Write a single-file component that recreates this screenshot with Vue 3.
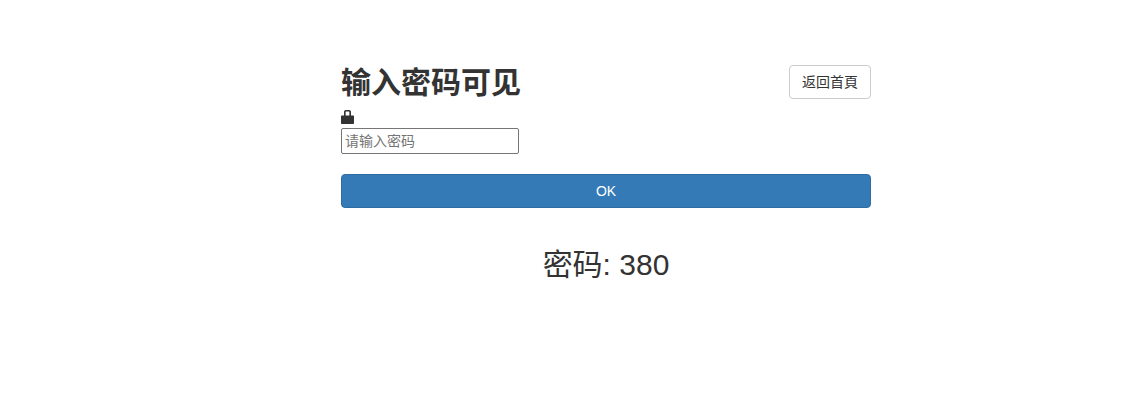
<template>
  <div class="page">
    <div class="panel">
      <div class="head">
        <h1 class="title">输入密码可见</h1>
        <a class="back">返回首頁</a>
      </div>
      <form class="form" @submit.prevent>
        <svg class="lock" width="13" height="14" viewBox="0 0 13 14" xmlns="http://www.w3.org/2000/svg">
          <path fill="#333" fill-rule="evenodd" d="M3 5.500V2C3 .8 3.800 0 5 0h3c1.200 0 2 .8 2 2v3.500h2.200c.5 0 .8.300.8.800v6.900c0 .5-.3.800-.8.800H.8c-.5 0-.8-.3-.8-.8V6.300c0-.5.3-.8.800-.8H3zm1.600 0h3.800V2.200c0-.4-.2-.6-.6-.6H5.200c-.4 0-.6.200-.6.600v3.300z"/>
        </svg>
        <input class="pwd" type="password" placeholder="请输入密码" />
        <button class="ok" type="submit">OK</button>
      </form>
      <p class="answer">密码: 380</p>
    </div>
  </div>
</template>

<script setup>
</script>

<style>
html, body {
  margin: 0;
  background: #fff;
}
</style>

<style scoped>
.page {
  width: 1132px;
  height: 408px;
  padding-top: 65px;
  box-sizing: border-box;
  font-family: "Liberation Sans", "Noto Sans CJK SC", sans-serif;
  color: #333;
}

.panel {
  width: 530px;
  margin-left: 341px;
}

.head {
  display: flex;
  justify-content: space-between;
  align-items: center;
  height: 34px;
}

.title {
  margin: 2px 0 0;
  font-size: 30px;
  line-height: 34px;
  font-weight: 700;
}

.back {
  box-sizing: border-box;
  height: 34px;
  padding: 6px 12px;
  font-size: 14px;
  line-height: 20px;
  border: 1px solid #ccc;
  border-radius: 4px;
}

.form {
  display: flex;
  flex-direction: column;
  align-items: flex-start;
}

.lock {
  margin-top: 11px;
  display: block;
}

.pwd {
  box-sizing: border-box;
  width: 178px;
  height: 26px;
  margin-top: 4px;
  padding: 1px 3px;
  font-family: inherit;
  font-size: 14px;
  border: 1px solid #767676;
  border-radius: 2px;
}

.pwd::placeholder {
  color: #757575;
}

.ok {
  width: 100%;
  height: 34px;
  margin-top: 20px;
  font-family: inherit;
  font-size: 14px;
  color: #fff;
  background: #337ab7;
  border: 1px solid #2e6da4;
  border-radius: 4px;
}

.answer {
  margin: 37px 0 0;
  font-size: 30px;
  line-height: 40px;
  text-align: center;
}
</style>
